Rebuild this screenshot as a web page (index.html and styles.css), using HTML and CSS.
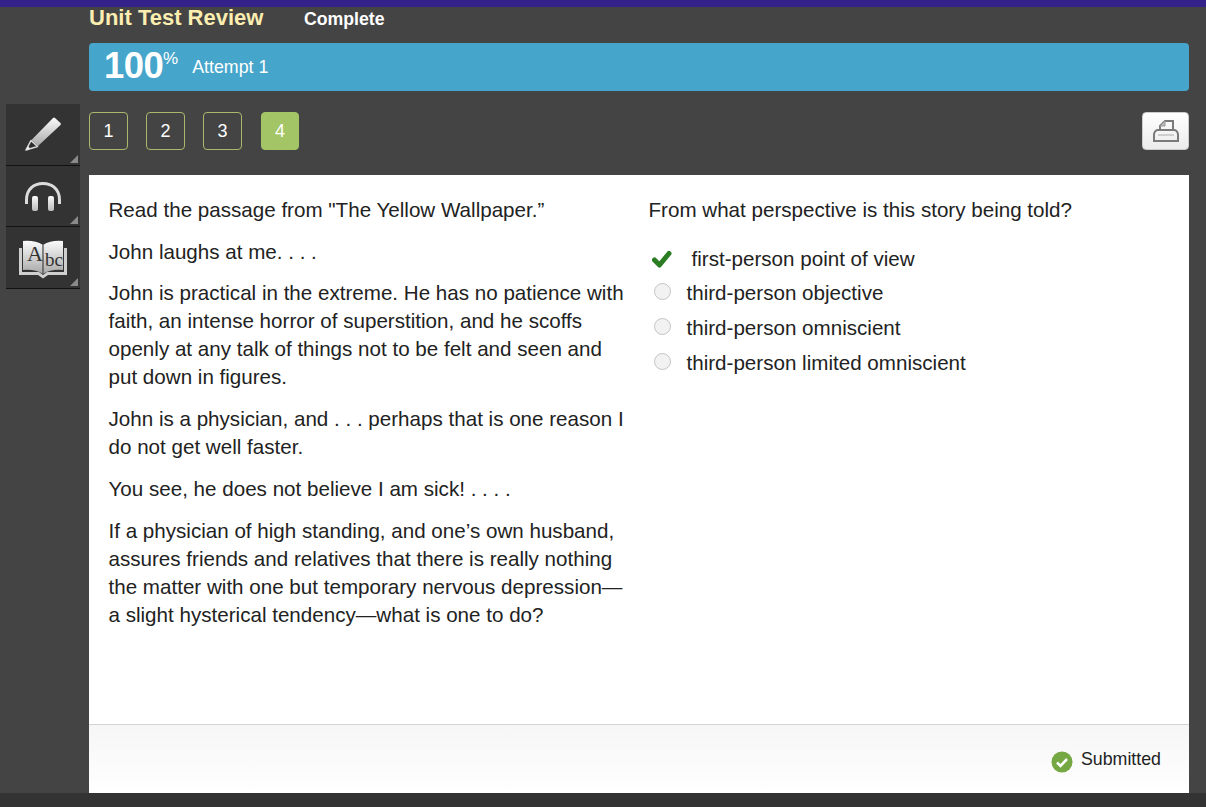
FILE: index.html
```html
<!DOCTYPE html>
<html lang="en">
<head>
<meta charset="utf-8">
<title>Unit Test Review</title>
<link rel="stylesheet" href="styles.css">
</head>
<body>
<div class="topbar"></div>
<div class="shell">
  <aside class="tools">
    <div class="tool">
      <svg class="icon" width="40" height="40" viewBox="0 0 40 40"><defs><linearGradient id="g1" x1="0" y1="0" x2="0" y2="1"><stop offset="0" stop-color="#fbfbfb"/><stop offset="1" stop-color="#a8a8a8"/></linearGradient></defs><path d="M30 4 Q31 3 32 4 L37.5 9 Q38.5 10 37.5 11 L15 32 L8.500 26 Z" fill="url(#g1)"/><path d="M3 36 L8 26.500 L14.500 32.500 Z" fill="#2e2e2e" stroke="#d8d8d8" stroke-width="1.6" stroke-linejoin="round"/><path d="M3 36 L5 32 L7 34.500 Z" fill="#eee"/></svg>
      <span class="corner"></span>
    </div>
    <div class="tool">
      <svg class="icon" width="40" height="40" viewBox="0 0 40 40"><defs><linearGradient id="g2" x1="0" y1="0" x2="0" y2="1"><stop offset="0" stop-color="#fafafa"/><stop offset="1" stop-color="#bbb"/></linearGradient></defs><path d="M3.500 28 V24 C3.500 13 11 7.500 20 7.500 C29 7.500 36.500 13 36.500 24 V28" fill="none" stroke="#dcdcdc" stroke-width="3"/><rect x="9" y="20" width="6" height="15" rx="2" fill="url(#g2)"/><rect x="25" y="20" width="6" height="15" rx="2" fill="url(#g2)"/></svg>
      <span class="corner"></span>
    </div>
    <div class="tool">
      <svg class="icon book" width="50" height="40" viewBox="0 0 50 40"><path d="M1 8 H4 V32 H21 L25 35 L29 32 H46 V8 H49 V35 H30 L25 38.500 L20 35 H1 Z" fill="#cfcfcf"/><path d="M5 1 Q17 0 25 5 Q33 0 45 1 V30 Q33 29 25 34 Q17 29 5 30 Z" fill="url(#g1)"/><path d="M25 5 V34" stroke="#444" stroke-width="1.2"/><text x="9" y="21" class="ab-a">A</text><text x="27" y="26" class="ab-bc">bc</text></svg>
      <span class="corner"></span>
    </div>
  </aside>
  <main class="content">
    <header class="title-row">
      <h1 class="title">Unit Test Review</h1>
      <span class="status">Complete</span>
    </header>
    <div class="score">
      <span class="pct">100<sup class="pct-sign">%</sup></span>
      <span class="attempt">Attempt 1</span>
    </div>
    <nav class="pager">
      <a class="page">1</a>
      <a class="page">2</a>
      <a class="page">3</a>
      <a class="page current">4</a>
      <button class="print" aria-label="Print">
        <svg width="28" height="24" viewBox="0 0 28 24"><path d="M8 11 V7 L13 2 H21 V11" fill="none" stroke="#7a7a7a" stroke-width="2"/><path d="M8 7 H13 V2" fill="#bbb" stroke="#999" stroke-width="1"/><path d="M6 11 H22 Q25 11 26 15 V22 H2 V15 Q3 11 6 11 Z" fill="none" stroke="#7a7a7a" stroke-width="2"/><path d="M6 16 H22" stroke="#aaa" stroke-width="1"/></svg>
      </button>
    </nav>
    <section class="card">
      <div class="columns">
        <div class="passage">
          <p>Read the passage from "The Yellow Wallpaper.”</p>
          <p>John laughs at me. . . .</p>
          <p>John is practical in the extreme. He has no patience with faith, an intense horror of superstition, and he scoffs openly at any talk of things not to be felt and seen and put down in figures.</p>
          <p>John is a physician, and . . . perhaps that is one reason I do not get well faster.</p>
          <p>You see, he does not believe I am sick! . . . .</p>
          <p>If a physician of high standing, and one’s own husband, assures friends and relatives that there is really nothing the matter with one but temporary nervous depression—a slight hysterical tendency—what is one to do?</p>
        </div>
        <div class="question">
          <p class="prompt">From what perspective is this story being told?</p>
          <ul class="options">
            <li class="option correct">
              <svg class="check" width="20" height="18" viewBox="0 0 20 18"><path d="M2.500 10 L7.500 15 L17 3.500" fill="none" stroke="#2b7d23" stroke-width="5" stroke-linejoin="round" stroke-linecap="round"/></svg>
              <span>first-person point of view</span>
            </li>
            <li class="option"><span class="radio"></span><span>third-person objective</span></li>
            <li class="option"><span class="radio"></span><span>third-person omniscient</span></li>
            <li class="option"><span class="radio"></span><span>third-person limited omniscient</span></li>
          </ul>
        </div>
      </div>
      <footer class="card-foot">
        <svg class="ok" width="22" height="22" viewBox="0 0 22 22"><circle cx="11" cy="11" r="10.500" fill="#75a843"/><path d="M6 11.500 L9.500 15 L16 8" fill="none" stroke="#fff" stroke-width="2.600"/></svg>
        <span class="submitted">Submitted</span>
      </footer>
    </section>
  </main>
</div>
<div class="bottombar"></div>
</body>
</html>
```
FILE: styles.css
```css
* { box-sizing: border-box; }
html, body { height: 100%; }
body {
  margin: 0;
  height: 807px;
  overflow: hidden;
  background: #444444;
  font-family: "Liberation Sans", Arial, sans-serif;
  color: #222;
  display: flex;
  flex-direction: column;
}
.topbar { height: 7px; background: #35218a; flex: none; }
.shell { display: flex; flex: 1; min-height: 0; }
.tools { width: 89px; flex: none; padding: 97px 0 0 6px; }
.tool {
  position: relative;
  width: 74px;
  height: 61.5px;
  background: #333333;
  border-bottom: 1px solid #111;
  display: flex;
  align-items: center;
  justify-content: center;
}
.icon { display: block; }
.book { position: relative; top: 3px; }
.corner {
  position: absolute;
  right: 2px;
  bottom: 2px;
  width: 0;
  height: 0;
  border-style: solid;
  border-width: 0 0 8px 8px;
  border-color: transparent transparent #8a8a8a transparent;
}
.ab-a { font: 400 22px "Liberation Serif", serif; fill: #333; }
.ab-bc { font: 400 19px "Liberation Serif", serif; fill: #333; }
.content { width: 1100px; flex: none; display: flex; flex-direction: column; }
.title-row { display: flex; align-items: center; height: 22px; margin-top: 0; }
.title {
  margin: 0;
  font-size: 22px;
  font-weight: 700;
  line-height: 22px;
  color: #fbeeb0;
  width: 215px;
}
.status { font-size: 17.7px; font-weight: 700; color: #fff; line-height: 22px; position: relative; top: 1px; }
.score {
  margin-top: 14px;
  height: 48px;
  background: #46a5cb;
  border-radius: 4px;
  display: flex;
  align-items: center;
  padding-left: 15px;
  color: #fff;
}
.pct { font-size: 36.5px; font-weight: 700; line-height: 46px; letter-spacing: -0.6px; position: relative; top: 2px; }
.pct-sign { font-size: 17px; font-weight: 400; letter-spacing: 0; vertical-align: baseline; position: relative; top: -14px; }
.attempt { font-size: 17.8px; margin-left: 14px; position: relative; top: 0; }
.pager { display: flex; align-items: center; margin-top: 21px; height: 38px; }
.page {
  width: 39px;
  height: 38px;
  margin-right: 18px;
  border: 1px solid #a9b86c;
  border-radius: 4px;
  color: #fff;
  font-size: 18px;
  display: flex;
  align-items: center;
  justify-content: center;
}
.page.current { width: 38px; margin-left: 1px; background: #a3c565; border-color: #a3c565; }
.print {
  margin-left: auto;
  width: 47px;
  height: 38px;
  padding: 0;
  border: 1px solid #ccc;
  border-radius: 4px;
  background: linear-gradient(#ffffff, #ebebeb);
  display: flex;
  align-items: center;
  justify-content: center;
}
.card {
  margin-top: 25px;
  height: 618px;
  background: #fff;
  display: flex;
  flex-direction: column;
}
.columns { flex: 1; display: flex; padding: 20.56px 0 0 19.5px; font-size: 20.6px; line-height: 27.95px; }
.passage { width: 519px; flex: none; }
.passage p { margin: 0 0 14px; }
.question { margin-left: 21px; flex: 1; }
.prompt { margin: 0 0 19.4px; }
.options { list-style: none; margin: 0; padding: 0; }
.option { display: flex; align-items: center; height: 35px; }
.option.correct { height: 33px; padding-left: 3px; }
.check { flex: none; margin-right: 20px; }
.radio {
  width: 17px;
  height: 17px;
  margin: -4px 16px 0 5px;
  flex: none;
  border-radius: 50%;
  border: 1px solid #c4c4c4;
  background: #f2f2f2;
}
.card-foot {
  height: 69px;
  flex: none;
  border-top: 1px solid #d4d4d4;
  background: linear-gradient(#f6f6f6, #ffffff);
  display: flex;
  align-items: center;
  justify-content: flex-end;
  padding-right: 28px;
}
.ok { margin-right: 8px; position: relative; top: 3px; }
.submitted { font-size: 17.8px; line-height: 22px; }
.bottombar { position: absolute; left: 0; right: 0; bottom: 0; height: 14px; background: #333; }
```
